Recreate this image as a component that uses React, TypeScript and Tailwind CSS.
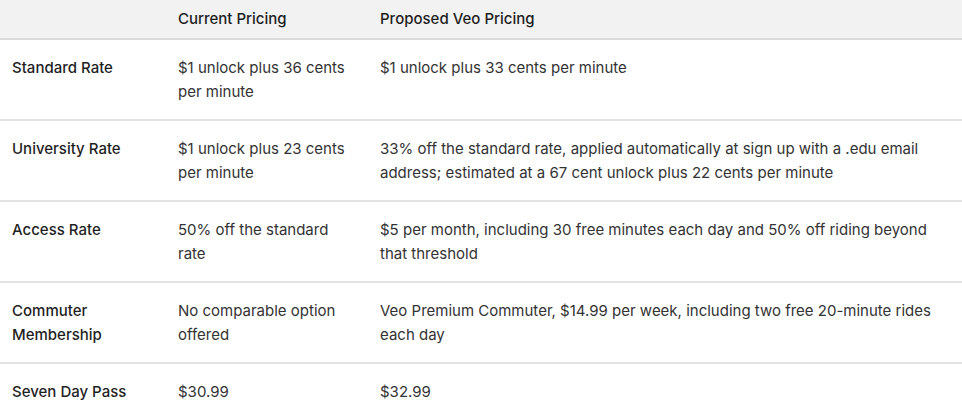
import React from "react";

const rows: [string, string, string][] = [
  ["Standard Rate", "$1 unlock plus 36 cents per minute", "$1 unlock plus 33 cents per minute"],
  ["University Rate", "$1 unlock plus 23 cents per minute", "33% off the standard rate, applied automatically at sign up with a .edu email address; estimated at a 67 cent unlock plus 22 cents per minute"],
  ["Access Rate", "50% off the standard rate", "$5 per month, including 30 free minutes each day and 50% off riding beyond that threshold"],
  ["Commuter Membership", "No comparable option offered", "Veo Premium Commuter, $14.99 per week, including two free 20-minute rides each day"],
  ["Seven Day Pass", "$30.99", "$32.99"],
];

export default function App() {
  return (
    <div className="w-[962px] h-[415px] overflow-hidden bg-white text-[#1f1f1f]" style={{ fontFamily: "Inter, 'Noto Sans', sans-serif" }}>
      <table className="w-full table-fixed border-collapse text-[15px] leading-6">
        <colgroup>
          <col className="w-[166px]" />
          <col className="w-[202px]" />
          <col />
        </colgroup>
        <thead>
          <tr className="bg-[#f2f2f2] border-b-2 border-[#dcdcdc]">
            <th className="h-[39px] px-3 text-left font-medium"></th>
            <th className="h-[39px] px-3 text-left font-medium">Current Pricing</th>
            <th className="h-[39px] px-3 text-left font-medium">Proposed Veo Pricing</th>
          </tr>
        </thead>
        <tbody>
          {rows.map((r, i) => (
            <tr key={i} className="border-b-2 border-[#e2e2e2] align-top">
              <td className="px-3 pt-[16px] pb-[15px] font-medium">{r[0]}</td>
              <td className="px-3 pt-[16px] pb-[15px] text-[#333333]">{r[1]}</td>
              <td className="px-3 pt-[16px] pb-[15px] pr-6 text-[#333333]">{r[2]}</td>
            </tr>
          ))}
        </tbody>
      </table>
    </div>
  );
}
